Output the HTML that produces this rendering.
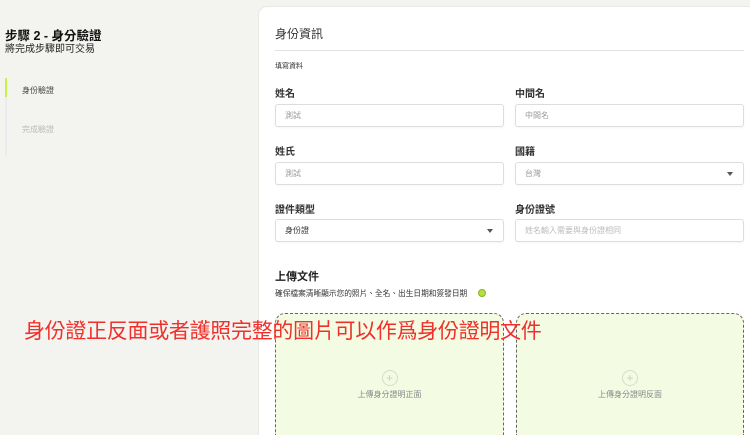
<!DOCTYPE html>
<html><head><meta charset="utf-8"><style>
*{box-sizing:border-box;margin:0;padding:0}
html,body{width:750px;height:435px;overflow:hidden}
body{background:#f3f3ef;font-family:"Liberation Sans","Noto Sans CJK TC",sans-serif;position:relative;color:#222}
.a{position:absolute;white-space:nowrap}
.card{position:absolute;left:258px;top:6px;width:492px;height:429px;background:#fff;border-radius:9px 0 0 0;border:1px solid #e8e8e4;border-right:none;border-bottom:none}
.inp{position:absolute;height:23px;border:1px solid #ddd;border-radius:3px;font-size:8px;color:#999;padding-left:9px;line-height:21px;box-shadow:0 1px 2px rgba(0,0,0,.04)}
.lbl{font-size:10px;font-weight:bold;color:#333}
.arr{position:absolute;right:10px;top:9px;width:0;height:0;border-left:3px solid transparent;border-right:3px solid transparent;border-top:4px solid #555}
.up{position:absolute;top:313px;height:122px;background:#f4fbe3;border:1px dashed #666;border-bottom:none;border-radius:10px 10px 0 0}
.plus{position:absolute;left:50%;top:56px;margin-left:-8px;width:16px;height:16px;border:1px solid #d5dccb;border-radius:50%;color:#ccc;font-size:12px;line-height:14px;text-align:center}
.ut{position:absolute;left:0;right:0;top:75px;text-align:center;font-size:8px;color:#888}
</style></head><body>
<div class="a" style="left:5px;top:25px;font-size:12.5px;font-weight:bold;color:#111">步驟 2 - 身分驗證</div>
<div class="a" style="left:5px;top:40px;font-size:10px;color:#222">將完成步驟即可交易</div>
<div class="a" style="left:5px;top:78px;width:2px;height:78px;background:#ebebef"></div>
<div class="a" style="left:5px;top:78px;width:2px;height:19px;background:#c8f04a"></div>
<div class="a" style="left:22px;top:85px;font-size:8px;color:#444">身份驗證</div>
<div class="a" style="left:22px;top:124px;font-size:8px;color:#bbb">完成驗證</div>
<div class="card"></div>
<div class="a" style="left:275px;top:25px;font-size:12px;color:#333">身份資訊</div>
<div class="a" style="left:275px;top:50px;width:469px;height:1px;background:#e2e2e2"></div>
<div class="a" style="left:275px;top:61px;font-size:7px;color:#333">填寫資料</div>
<div class="a lbl" style="left:275px;top:85px">姓名</div>
<div class="a lbl" style="left:515px;top:85px">中間名</div>
<div class="inp" style="left:275px;top:104px;width:229px">測試</div>
<div class="inp" style="left:515px;top:104px;width:229px">中間名</div>
<div class="a lbl" style="left:275px;top:143px">姓氏</div>
<div class="a lbl" style="left:515px;top:143px">國籍</div>
<div class="inp" style="left:275px;top:162px;width:229px">測試</div>
<div class="inp" style="left:515px;top:162px;width:229px">台灣<span class="arr"></span></div>
<div class="a lbl" style="left:275px;top:201px">證件類型</div>
<div class="a lbl" style="left:515px;top:201px">身份證號</div>
<div class="inp" style="left:275px;top:219px;width:229px;color:#333">身份證<span class="arr"></span></div>
<div class="inp" style="left:515px;top:219px;width:229px;color:#bbb">姓名輸入需要與身份證相同</div>
<div class="a" style="left:275px;top:268px;font-size:11px;font-weight:bold;color:#222">上傳文件</div>
<div class="a" style="left:275px;top:288px;font-size:7.7px;color:#333">確保檔案清晰顯示您的照片、全名、出生日期和簽發日期</div>
<div class="a" style="left:478px;top:289px;width:8px;height:8px;border-radius:50%;background:#b6e040;border:1px solid #8ab020"></div>
<div class="up" style="left:275px;width:229px"><div class="plus">+</div><div class="ut">上傳身分證明正面</div></div>
<div class="up" style="left:516px;width:228px"><div class="plus">+</div><div class="ut">上傳身分證明反面</div></div>
<div class="a" style="left:24px;top:315px;font-size:21px;color:#f0302a;letter-spacing:-0.3px">身份證正反面或者護照完整的圖片可以作爲身份證明文件</div>
</body></html>
